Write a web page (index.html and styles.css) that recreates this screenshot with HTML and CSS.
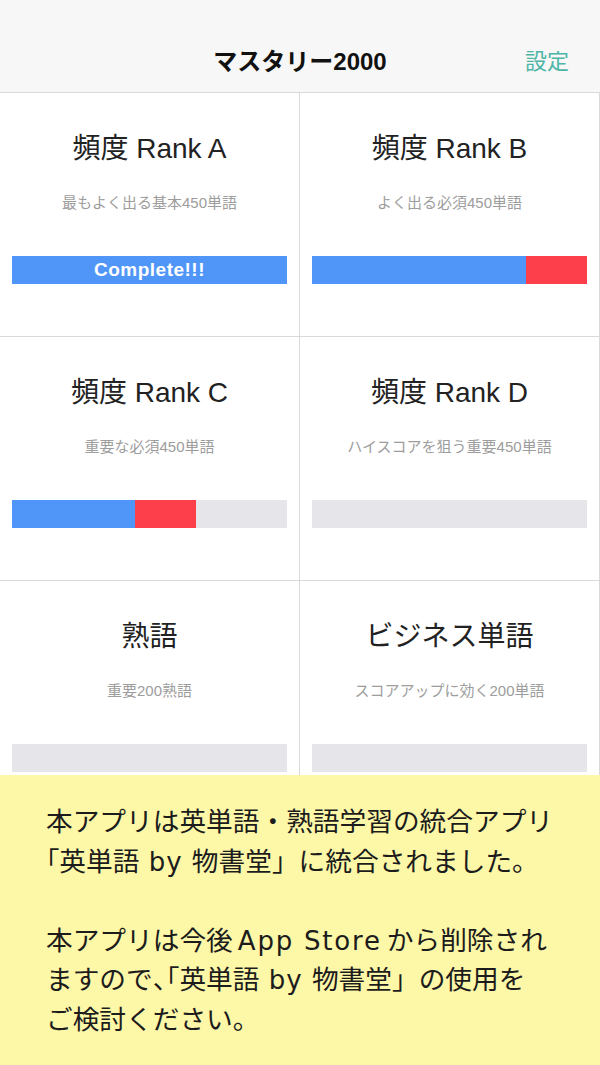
FILE: index.html
```html
<!DOCTYPE html>
<html lang="ja">
<head>
<meta charset="utf-8">
<title>マスタリー2000</title>
<link rel="stylesheet" href="styles.css">
</head>
<body>
<header class="nav">
  <div class="nav-spacer"></div>
  <div class="nav-title">マスタリー2000</div>
  <div class="nav-action">設定</div>
</header>
<main class="grid">
  <section class="cell">
    <h2 class="cell-title">頻度 Rank A</h2>
    <p class="cell-sub">最もよく出る基本450単語</p>
    <div class="bar bar-complete"><span class="bar-label">Complete!!!</span></div>
  </section>
  <section class="cell">
    <h2 class="cell-title">頻度 Rank B</h2>
    <p class="cell-sub">よく出る必須450単語</p>
    <div class="bar"><div class="seg seg-blue" style="width:77.8%"></div><div class="seg seg-red" style="width:22.2%"></div></div>
  </section>
  <section class="cell">
    <h2 class="cell-title">頻度 Rank C</h2>
    <p class="cell-sub">重要な必須450単語</p>
    <div class="bar"><div class="seg seg-blue" style="width:44.7%"></div><div class="seg seg-red" style="width:22.2%"></div></div>
  </section>
  <section class="cell">
    <h2 class="cell-title">頻度 Rank D</h2>
    <p class="cell-sub">ハイスコアを狙う重要450単語</p>
    <div class="bar"></div>
  </section>
  <section class="cell">
    <h2 class="cell-title">熟語</h2>
    <p class="cell-sub">重要200熟語</p>
    <div class="bar"></div>
  </section>
  <section class="cell">
    <h2 class="cell-title">ビジネス単語</h2>
    <p class="cell-sub">スコアアップに効く200単語</p>
    <div class="bar"></div>
  </section>
</main>
<aside class="notice">
  <p class="notice-p">本アプリは英単語・熟語学習の統合アプリ<br><span class="halt">「</span>英単語<span class="latin"> by </span>物書堂」に統合されました。</p>
  <p class="notice-p">本アプリは今後<span class="latin latin-wide">App Store</span>から削除され<br>ますので<span class="halt">、「</span>英単語<span class="latin"> by </span>物書堂」の使用を<br>ご検討ください。</p>
</aside>
</body>
</html>
```
FILE: styles.css
```css
* { box-sizing: border-box; }
html, body {
  margin: 0;
  padding: 0;
  background: #ffffff;
}
body {
  width: 600px;
  height: 1065px;
  overflow: hidden;
  font-family: "Liberation Sans", "Noto Sans CJK JP", sans-serif;
  color: #222222;
}
.nav {
  height: 93px;
  background: #f7f7f7;
  border-bottom: 1px solid #d9d9d9;
  display: grid;
  grid-template-columns: 1fr auto 1fr;
  align-items: end;
  padding: 0 31px 15px 31px;
}
.nav-title {
  font-size: 24px;
  font-weight: bold;
  line-height: 30px;
  color: #111111;
}
.nav-action {
  justify-self: end;
  font-size: 22px;
  line-height: 30px;
  color: #4db5a6;
}
.grid {
  display: grid;
  grid-template-columns: 300px 300px;
}
.cell {
  height: 244px;
  border-right: 1px solid #d9d9d9;
  border-bottom: 1px solid #d9d9d9;
  padding: 36px 12px 0 12px;
  display: flex;
  flex-direction: column;
  align-items: stretch;
}
.cell-title {
  margin: 0;
  font-size: 28px;
  font-weight: normal;
  line-height: 40px;
  text-align: center;
  color: #222222;
}
.cell-sub {
  margin: 24px 0 0 0;
  font-size: 15px;
  line-height: 20px;
  text-align: center;
  color: #9d9d9d;
}
.bar {
  margin-top: 43px;
  height: 28px;
  background: #e6e5ea;
  display: flex;
}
.bar-complete {
  background: #5096f8;
  justify-content: center;
  align-items: center;
}
.bar-label {
  font-family: "Liberation Sans", sans-serif;
  font-weight: bold;
  font-size: 19px;
  letter-spacing: 0.5px;
  line-height: 28px;
  color: #ffffff;
}
.seg { height: 100%; }
.seg-blue { background: #5096f8; }
.seg-red { background: #fd3e4b; }
.notice {
  position: fixed;
  left: 0;
  right: 0;
  bottom: 0;
  height: 290px;
  background: #fdf7a8;
  padding: 28px 0 0 46px;
}
.notice-p {
  margin: 0 0 39.5px 0;
  font-size: 26.7px;
  line-height: 39.5px;
  color: #1c1c1c;
  white-space: nowrap;
}
.latin {
  font-family: "DejaVu Sans", "Liberation Sans", sans-serif;
  font-size: 26px;
  letter-spacing: 1px;
}
.latin-wide {
  letter-spacing: 1.8px;
  margin: 0 5px;
}
.halt {
  font-feature-settings: "halt";
}
```
